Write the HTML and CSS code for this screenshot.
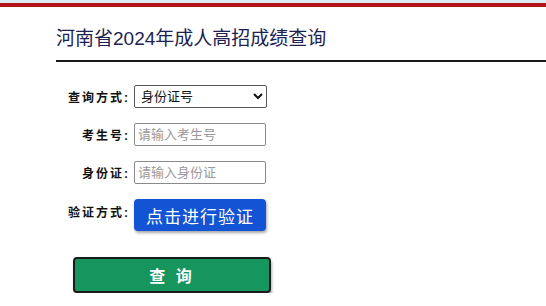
FILE: index.html
```html
<!DOCTYPE html>
<html lang="zh-CN">
<head>
    <meta charset="UTF-8">
    <meta name="viewport" content="width=device-width, initial-scale=1.0">
    <title>河南省2024年成人高招成绩查询</title>
    <link rel="stylesheet" href="styles.css">
</head>
<body>

    <div class="topbar"></div>

    <section class="main">
        <div class="head">
            <h1>河南省2024年成人高招成绩查询</h1>
        </div>

        <form class="query" onsubmit="return false">
            <div class="row">
                <label for="mode">查询方式:</label>
                <select id="mode">
                    <option>身份证号</option>
                    <option>考生号</option>
                </select>
            </div>

            <div class="row">
                <label for="ksh">考生号:</label>
                <input type="text" id="ksh" placeholder="请输入考生号">
            </div>

            <div class="row">
                <label for="sfz">身份证:</label>
                <input type="text" id="sfz" placeholder="请输入身份证">
            </div>

            <div class="row verify">
                <label>验证方式:</label>
                <button type="button" class="btn-verify">点击进行验证</button>
            </div>

            <button type="submit" class="btn-query">查 询</button>
        </form>
    </section>

</body>
</html>
```

FILE: styles.css
```css
* {
    margin: 0;
    padding: 0;
    box-sizing: border-box;
    font-family: "Liberation Sans", "Noto Sans CJK SC", sans-serif;
}

body {
    background-color: #fff;
    overflow: hidden;
}

.topbar {
    height: 7px;
    background-color: #dcedf2;
    border-bottom: solid 4px #b3141c;
}

section.main .head {
    margin-left: 56px;
    padding-top: 20px;
    padding-bottom: 9px;
    border-bottom: solid 2px #1a1a1a;
}

section.main .head h1 {
    font-size: 19px;
    line-height: 24px;
    font-weight: normal;
    color: #1d2251;
}

section.main .query {
    margin-top: 23px;
    margin-left: 56px;
    display: flex;
    flex-direction: column;
    gap: 15px;
}

section.main .row {
    display: flex;
    align-items: center;
    gap: 4px;
}

section.main .row label {
    width: 74px;
    text-align: right;
    font-size: 12px;
    font-weight: bold;
    letter-spacing: 2px;
    color: #111;
}

section.main .row select {
    width: 133px;
    height: 23px;
    border: solid 1px #555;
    border-radius: 2px;
    padding-left: 2px;
    font-size: 13px;
    color: #111;
    background-color: #fff;
    outline: none;
}

section.main .row input {
    width: 132px;
    height: 23px;
    border: solid 1px #8a8a8a;
    border-radius: 2px;
    padding-left: 3px;
    font-size: 13px;
    outline: none;
}

section.main .row input::placeholder {
    color: #9a9a9a;
}

section.main .row.verify {
    align-items: flex-start;
}

section.main .row.verify label {
    padding-top: 4px;
}

section.main .btn-verify {
    width: 132px;
    height: 32px;
    border: none;
    border-radius: 4px;
    background-color: #1254d4;
    color: #fff;
    font-size: 17px;
    letter-spacing: 1px;
    box-shadow: 1px 2px 3px rgba(0, 0, 0, .35);
    cursor: pointer;
}

section.main .btn-query {
    margin-top: 11px;
    margin-left: 17px;
    width: 198px;
    height: 36px;
    border: solid 2px #1b1b1b;
    border-radius: 4px;
    background-color: #17955e;
    color: #fff;
    font-size: 16px;
    font-weight: bold;
    letter-spacing: 3px;
    box-shadow: 1px 3px 3px rgba(0, 0, 0, .3);
    cursor: pointer;
}
```
